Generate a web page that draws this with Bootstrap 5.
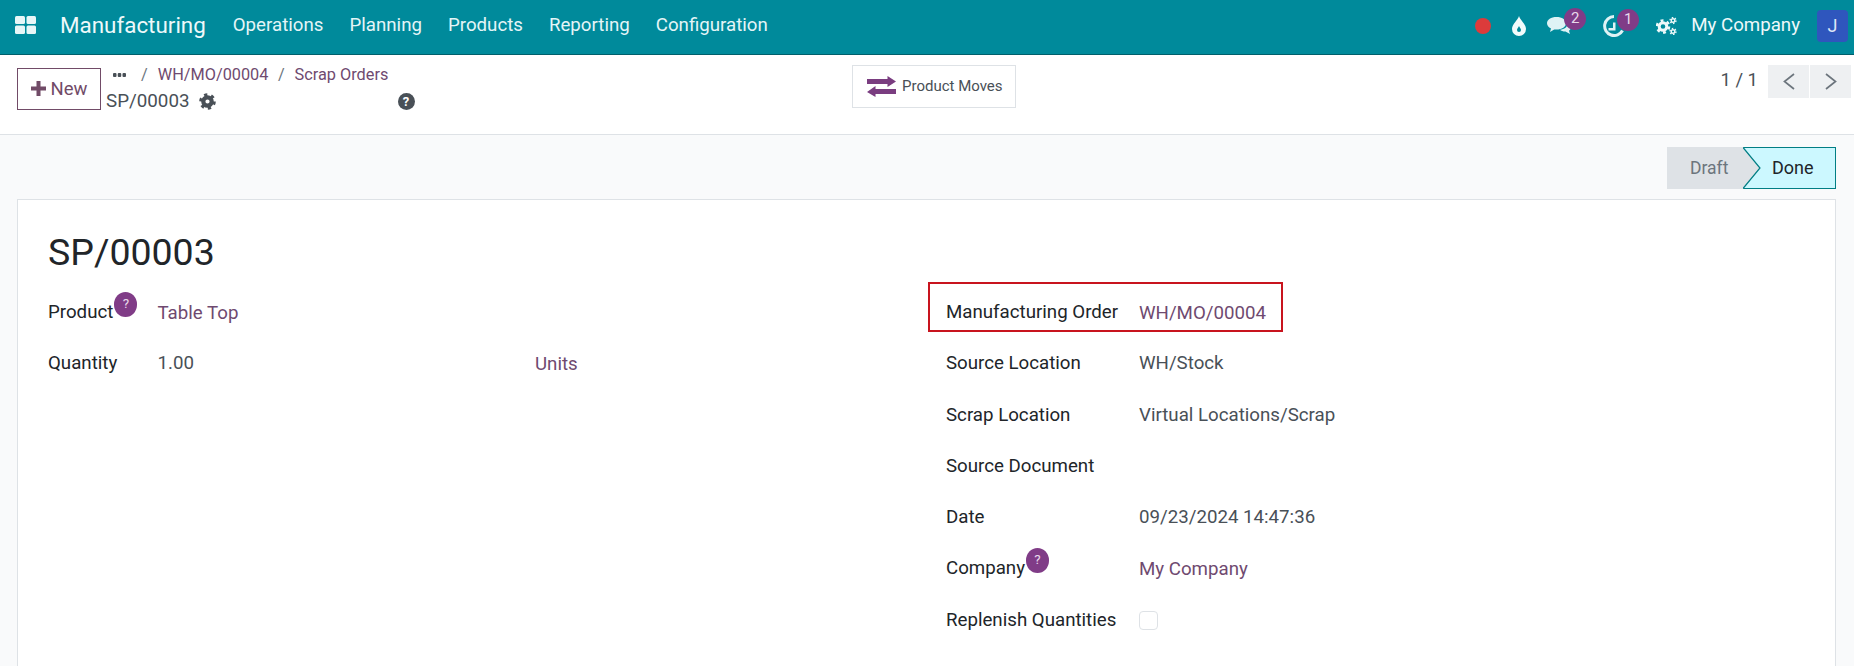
<!DOCTYPE html>
<html lang="en">
<head>
<meta charset="utf-8">
<title>SP/00003</title>
<link href="https://cdn.jsdelivr.net/npm/bootstrap@5.3.0/dist/css/bootstrap.min.css" rel="stylesheet">
<style>
html,body{height:666px;overflow:hidden}
body{font-family:Roboto,"Liberation Sans",sans-serif;font-size:18.7px;color:#212529;background:#f9fafb}
.topbar{height:55px;background:#008a9b;border-bottom:1px solid #005f6b;color:#eef9fa;padding:0 6px 3px 15px}
.appgrid{width:21px;height:18px;margin-right:24px;flex:none;margin-top:-2px}
.appname{font-size:22.4px;color:#eef9fa;margin-right:27px}
.topmenu{color:#e4f5f7;margin-right:26px;font-size:18.7px}
.sysicons{height:32px}
.sysdot{width:16px;height:16px;background:#dc3b3b;border-radius:50%}
.iconbox{position:relative;display:block;flex:none}
.dropbox{margin-left:21px;width:14px;height:20px}
.chatbox{margin-left:21px;width:24px;height:20px;margin-top:3px}
.clockbox{margin-left:32px;width:22px;height:22px;margin-top:0}
.gearbox{margin-left:31px;width:21px;height:18px;margin-top:1px}
.iconbox svg{display:block}
.bubble{position:absolute;width:22px;height:22px;border-radius:50%;background:#803c87;color:#e8d9ea;font-size:15px;line-height:21px;text-align:center}
.bubchat{left:17px;top:-9px}
.bubclock{left:14px;top:-6px}
.compname{margin-left:14px;margin-right:17px}
.avatar{width:31px;height:32px;background:#2f56bd;border-radius:4px;color:#dfe7f7;font-size:18px;line-height:32px;text-align:center}
.ctrlpanel{height:80px;background:#fff;border-bottom:1px solid #dee2e6;padding:10px 3px 0 17px}
.btn-new{width:84px;height:42px;margin-top:3px;border:1px solid #714b67;color:#714b67;font-size:18.5px;line-height:40px;text-align:center;flex:none}
.btn-new svg{vertical-align:-1px;margin-right:5px}
.crumbs{margin-left:5px;width:746px;flex:none;color:#495057}
.crumbline{height:20px;line-height:20px;font-size:16.3px;color:#6c757d}
.crumbdots{margin-left:7px}
.crumblink{color:#6f4a70}
.sep{margin:0 10px 0 9.5px}
.sepfirst{margin-left:15px}
.curline{margin-top:3px;font-size:18.8px;line-height:26px;color:#495057}
.curgear{margin-left:9px}
.helpdot{margin-left:182px;width:17px;height:17px;background:#495057;color:#fff;font-size:13px;line-height:17px;font-weight:700}
.pmoves{width:164px;height:43px;border:1px solid #dee2e6;color:#495057;font-size:15px;flex:none;gap:6px;padding-left:14px}
.pagertxt{font-size:18.5px;color:#495057;margin-right:9px;line-height:30px}
.pagerbtn{width:41px;height:33px;background:#eef0f2;margin-left:1px}
.statuswrap{height:64px;padding:12px 18px 0 0}
.stdraft{width:76px;height:42px;background:#dee2e6;color:#6c757d;padding-left:23px;line-height:42px;font-size:17.5px}
.stdone{position:relative;width:93px;height:42px;background:#ccf8ff;border:1px solid #017e84;border-left:0;line-height:40px;padding-left:29px;font-size:18px;color:#212529}
.notch{position:absolute;left:0;top:-1px;width:18px;height:42px}
.sheet{margin:0 18px 0 17px;height:480px;background:#fff;border:1px solid #dee2e6;border-bottom:0;padding:30px 30px 0 30px}
.rectitle{font-size:37.5px;line-height:44px;color:#212529;margin:0 0 24px;font-weight:400}
.colleft{width:898px;flex:none}
.frow{height:51.3px;position:relative}
.flabelL{width:109.5px;flex:none;color:#212529}
.flabelR{width:193px;flex:none;color:#212529}
.lbltext{position:relative}
.val{color:#495057}
.lnk{color:#6f4a70;padding-top:1px}
.qmark{position:absolute;left:calc(100% + 1px);top:-9px;width:23px;height:24.5px;border-radius:50%;background:#803c87;color:#e8d9ea;font-size:13.5px;line-height:22px;text-align:center}
.qtyval{width:377.5px;flex:none}
.redbox{position:absolute;left:-18px;top:-16px;width:355px;height:50px;border:2px solid #c8141e;pointer-events:none}
.checkcell{width:19px;height:19px;border:1px solid #dee2e6;border-radius:4px;background:#fff;margin-top:5px}
</style>
</head>
<body>
<nav class="topbar d-flex align-items-center">
  <svg class="appgrid" viewBox="0 0 21 18"><g fill="#e8f6f7"><rect width="10" height="8" rx="1.5"/><rect x="11.5" width="9.5" height="8" rx="1.5"/><rect y="9.5" width="10" height="8.5" rx="1.5"/><rect x="11.5" y="9.5" width="9.5" height="8.5" rx="1.5"/></g></svg>
  <span class="appname">Manufacturing</span>
  <span class="topmenu">Operations</span>
  <span class="topmenu">Planning</span>
  <span class="topmenu">Products</span>
  <span class="topmenu">Reporting</span>
  <span class="topmenu">Configuration</span>
  <div class="sysicons ms-auto d-flex align-items-center">
    <span class="sysdot"></span>
    <span class="iconbox dropbox"><svg width="14" height="20" viewBox="0 0 14 20"><path fill="#f2fbfb" d="M7 0C6 4 0 8 0 13a7 7 0 0 0 14 0C14 8 8 4 7 0z"/><path fill="#008a9b" d="M7 10c-.5 1.500-2 2.500-2 4a2 2 0 0 0 4 0c0-1.500-1.500-2.500-2-4z"/></svg></span>
    <span class="iconbox chatbox"><svg width="24" height="20" viewBox="0 0 24 20"><path fill="#dff3f5" d="M9.500 0C15 0 19 2.700 19 6.300S15 12.600 9.500 12.600c-.8 0-1.500 0-2.300-.2L3 15l1-3.500C1.500 10.500 0 8.500 0 6.300 0 2.700 4 0 9.500 0z"/><path fill="#dff3f5" d="M20.500 6.500C22.500 7.500 24 9 24 10.600c0 1.300-1 2.400-2 3.100l1 3.300-4.500-2.500c-2.500 0-4.500-.8-5.500-1.800 4.500-.2 7.500-2.800 7.500-6.200z"/></svg><span class="bubble bubchat">2</span></span>
    <span class="iconbox clockbox"><svg width="22" height="22" viewBox="0 0 22 22"><path fill="none" stroke="#dff3f5" stroke-width="3" d="M19.500 15.500A9.500 9.500 0 1 1 11 1.500"/><path fill="#dff3f5" d="M10 7.500h2.500v8H5.500V13H10z"/></svg><span class="bubble bubclock">1</span></span>
    <span class="iconbox gearbox"><svg width="21" height="18" viewBox="0 0 21 18"><circle cx="7" cy="9.500" r="3.800" fill="none" stroke="#eef9fa" stroke-width="3"/><circle cx="7" cy="9.500" r="6" fill="none" stroke="#eef9fa" stroke-width="2.600" stroke-dasharray="2.900 3.380"/><circle cx="17" cy="3.500" r="1.800" fill="none" stroke="#eef9fa" stroke-width="1.400"/><circle cx="17" cy="3.500" r="3" fill="none" stroke="#eef9fa" stroke-width="1.300" stroke-dasharray="1.500 1.640"/><circle cx="17" cy="14.500" r="1.800" fill="none" stroke="#eef9fa" stroke-width="1.400"/><circle cx="17" cy="14.500" r="3" fill="none" stroke="#eef9fa" stroke-width="1.300" stroke-dasharray="1.500 1.640"/></svg></span>
    <span class="compname">My Company</span>
    <span class="avatar">J</span>
  </div>
</nav>
<header class="ctrlpanel d-flex">
  <div class="btn-new"><svg width="15" height="15" viewBox="0 0 15 15"><path fill="#714b67" d="M5.500 0h4v5.500H15v4H9.500V15h-4V9.500H0v-4h5.500z"/></svg>New</div>
  <div class="crumbs">
    <div class="crumbline d-flex align-items-center">
      <svg class="crumbdots" width="13" height="4" viewBox="0 0 13 4"><g fill="#495057"><rect width="3.500" height="4" rx="1"/><rect x="4.750" width="3.500" height="4" rx="1"/><rect x="9.500" width="3.500" height="4" rx="1"/></g></svg>
      <span class="sep sepfirst">/</span><span class="crumblink">WH/MO/00004</span><span class="sep">/</span><span class="crumblink">Scrap Orders</span>
    </div>
    <div class="curline d-flex align-items-center">
      <span>SP/00003</span>
      <svg class="curgear" width="17" height="17" viewBox="0 0 17 17"><circle cx="8.500" cy="8.500" r="4.200" fill="none" stroke="#495057" stroke-width="4.200"/><circle cx="8.500" cy="8.500" r="6.900" fill="none" stroke="#495057" stroke-width="2.800" stroke-dasharray="3.200 4.030"/></svg>
      <span class="helpdot d-inline-block rounded-circle text-center">?</span>
    </div>
  </div>
  <div class="pmoves d-flex align-items-center">
    <svg width="29" height="21" viewBox="0 0 29 21"><path fill="#7a3d80" d="M0 3h20.500V0L29 5.500 20.500 11V8H0zM29 13H8.500V10L0 16l8.500 5v-3H29z"/></svg>
    <span>Product Moves</span>
  </div>
  <div class="ms-auto d-flex align-items-start">
    <span class="pagertxt">1 / 1</span>
    <div class="pagerbtn d-flex align-items-center justify-content-center"><svg width="12" height="17" viewBox="0 0 12 17"><path fill="none" stroke="#6c757d" stroke-width="1.700" d="M11 1L1.500 8.500 11 16"/></svg></div>
    <div class="pagerbtn d-flex align-items-center justify-content-center"><svg width="12" height="17" viewBox="0 0 12 17"><path fill="none" stroke="#6c757d" stroke-width="1.700" d="M1 1l9.500 7.500L1 16"/></svg></div>
  </div>
</header>
<div class="statuswrap d-flex justify-content-end">
  <div class="stdraft">Draft</div>
  <div class="stdone"><svg class="notch" viewBox="0 0 18 42"><path fill="#dee2e6" d="M0 0l17 21L0 42z"/><path fill="none" stroke="#017e84" stroke-width="1.200" d="M0 .5L17 21 0 41.500"/></svg>Done</div>
</div>
<main class="sheet">
  <h1 class="rectitle">SP/00003</h1>
  <div class="d-flex">
    <div class="colleft">
      <div class="frow d-flex"><span class="flabelL"><span class="lbltext">Product<span class="qmark">?</span></span></span><span class="lnk">Table Top</span></div>
      <div class="frow d-flex"><span class="flabelL">Quantity</span><span class="val qtyval">1.00</span><span class="lnk">Units</span></div>
    </div>
    <div class="flex-grow-1">
      <div class="frow d-flex"><span class="redbox"></span><span class="flabelR">Manufacturing Order</span><span class="lnk">WH/MO/00004</span></div>
      <div class="frow d-flex"><span class="flabelR">Source Location</span><span class="val">WH/Stock</span></div>
      <div class="frow d-flex"><span class="flabelR">Scrap Location</span><span class="val">Virtual Locations/Scrap</span></div>
      <div class="frow d-flex"><span class="flabelR">Source Document</span></div>
      <div class="frow d-flex"><span class="flabelR">Date</span><span class="val">09/23/2024 14:47:36</span></div>
      <div class="frow d-flex"><span class="flabelR"><span class="lbltext">Company<span class="qmark">?</span></span></span><span class="lnk">My Company</span></div>
      <div class="frow d-flex"><span class="flabelR">Replenish Quantities</span><span class="checkcell"></span></div>
    </div>
  </div>
</main>
<script src="https://cdn.jsdelivr.net/npm/bootstrap@5.3.0/dist/js/bootstrap.bundle.min.js"></script>
</body>
</html>
